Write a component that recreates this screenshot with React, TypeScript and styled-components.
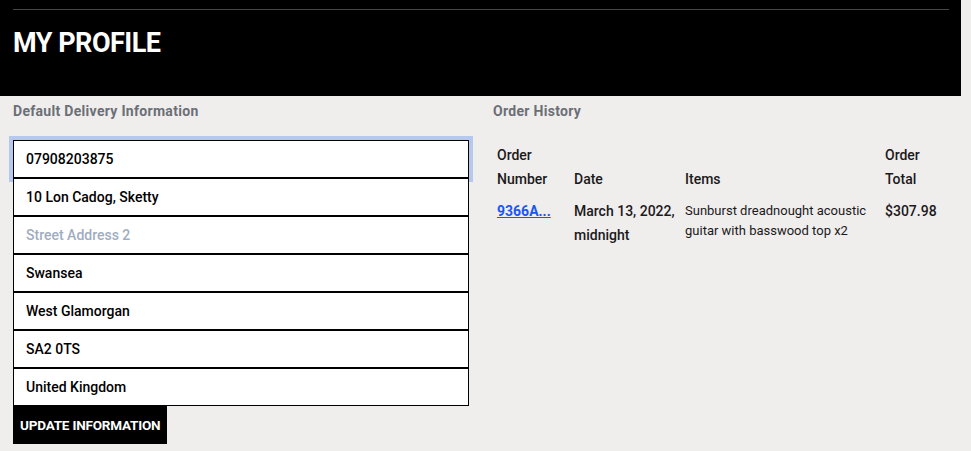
import React from "react";
import styled, { createGlobalStyle } from "styled-components";

const Global = createGlobalStyle`
  html, body { margin: 0; padding: 0; background: #f0eded; }
  body { font-family: Roboto, "Liberation Sans", sans-serif; }
  * { box-sizing: border-box; }
`;

const Page = styled.div`
  width: 961px;
  background: #f0eded;
`;

const Header = styled.header`
  background: #000;
  height: 96px;
  padding: 9px 12px 0 13px;
`;

const Rule = styled.hr`
  margin: 0;
  border: 0;
  border-top: 1px solid #464646;
`;

const Title = styled.h1`
  margin: 18px 0 0;
  color: #fff;
  font-size: 27px;
  font-weight: 700;
  letter-spacing: -0.5px;
  line-height: 30px;
`;

const Main = styled.main`
  display: grid;
  grid-template-columns: 456px 1fr;
  column-gap: 24px;
  padding: 0 13px;
`;

const Column = styled.section`
  display: flex;
  flex-direction: column;
`;

const SectionTitle = styled.h2`
  margin: 7px 0 0;
  font-size: 14px;
  line-height: 16px;
  font-weight: 700;
  letter-spacing: 0.3px;
  color: #6b6f76;
`;

const Form = styled.form`
  display: flex;
  flex-direction: column;
  margin-top: 21px;
`;

const Field = styled.input<{ $focused?: boolean }>`
  display: block;
  width: 456px;
  height: 38px;
  margin: 0;
  padding: 0 12px;
  border: 1px solid #000;
  background: #fff;
  font-family: Roboto, "Liberation Sans", sans-serif;
  font-size: 14px;
  font-weight: 500;
  color: #000;
  outline: none;
  box-shadow: ${(p) => (p.$focused ? "0 0 0 4px #b5c9ef" : "none")};
  &::placeholder { color: #a0adc0; }
`;

const Button = styled.button`
  align-self: flex-start;
  height: 38px;
  padding: 0 7px;
  border: 0;
  background: #000;
  color: #fff;
  font-family: Roboto, "Liberation Sans", sans-serif;
  font-size: 13.5px;
  font-weight: 700;
  letter-spacing: -0.2px;
`;

const Table = styled.table`
  margin-top: 24px;
  border-collapse: collapse;
  font-size: 14px;
  font-weight: 500;
  color: #1a1a1a;
`;

const Th = styled.th<{ $w?: number }>`
  text-align: left;
  vertical-align: bottom;
  font-weight: 500;
  line-height: 24px;
  padding: 0 4px 4px;
  width: ${(p) => (p.$w ? `${p.$w}px` : "auto")};
`;

const Td = styled.td<{ $small?: boolean }>`
  vertical-align: top;
  padding: ${(p) => (p.$small ? "6px 4px 0" : "4px 4px 0")};
  line-height: ${(p) => (p.$small ? "20px" : "24px")};
  font-size: ${(p) => (p.$small ? "13px" : "14px")};
  font-weight: ${(p) => (p.$small ? 400 : 500)};
`;

const OrderLink = styled.a`
  color: #1a56f0;
  font-weight: 700;
  text-decoration: underline;
`;

export default function App() {
  const fields = [
    { v: "07908203875", f: true },
    { v: "10 Lon Cadog, Sketty" },
    { v: "", p: "Street Address 2" },
    { v: "Swansea" },
    { v: "West Glamorgan" },
    { v: "SA2 0TS" },
    { v: "United Kingdom" },
  ];
  return (
    <Page>
      <Global />
      <Header>
        <Rule />
        <Title>MY PROFILE</Title>
      </Header>
      <Main>
        <Column>
          <SectionTitle>Default Delivery Information</SectionTitle>
          <Form onSubmit={(e) => e.preventDefault()}>
            {fields.map((x, i) => (
              <Field key={i} defaultValue={x.v} placeholder={x.p} $focused={x.f} />
            ))}
            <Button type="submit">UPDATE INFORMATION</Button>
          </Form>
        </Column>
        <Column>
          <SectionTitle>Order History</SectionTitle>
          <Table>
            <thead>
              <tr>
                <Th $w={77}>Order Number</Th>
                <Th $w={111}>Date</Th>
                <Th $w={200}>Items</Th>
                <Th>Order Total</Th>
              </tr>
            </thead>
            <tbody>
              <tr>
                <Td><OrderLink href="#">9366A...</OrderLink></Td>
                <Td>March 13, 2022, midnight</Td>
                <Td $small>Sunburst dreadnought acoustic guitar with basswood top x2</Td>
                <Td>$307.98</Td>
              </tr>
            </tbody>
          </Table>
        </Column>
      </Main>
    </Page>
  );
}
